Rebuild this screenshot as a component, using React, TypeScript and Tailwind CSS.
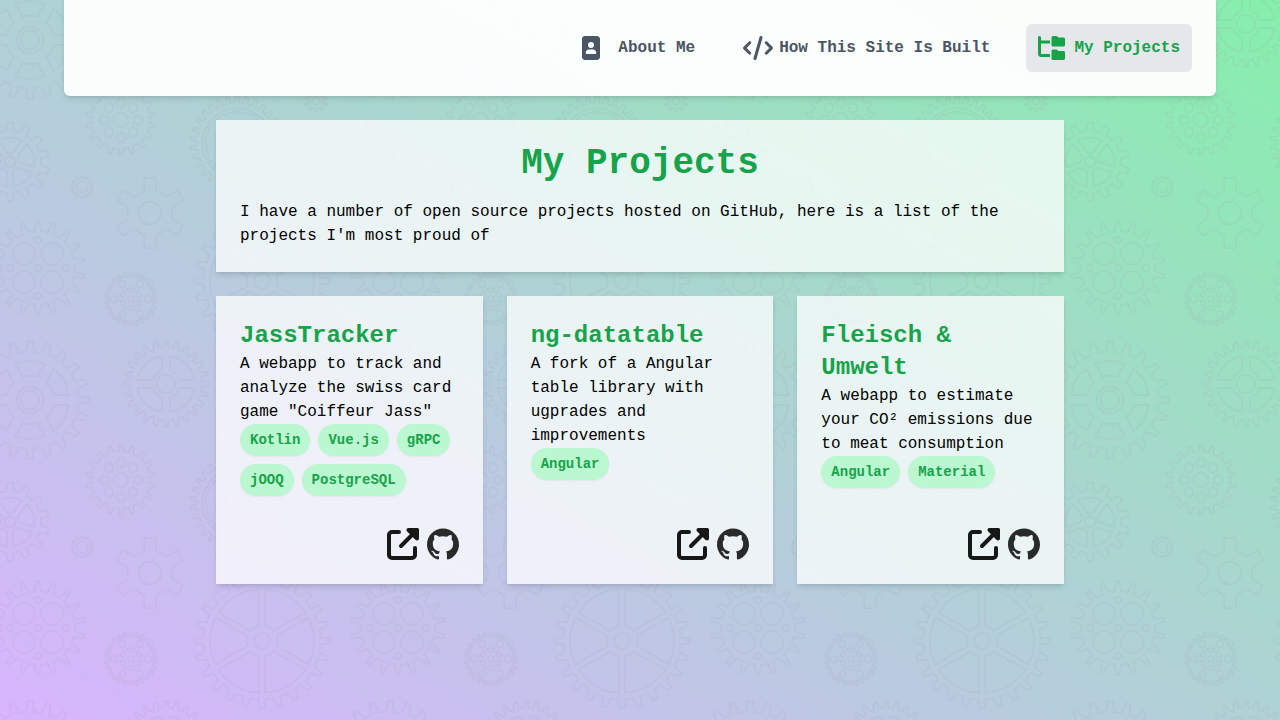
import type { ReactNode } from "react";
import { FaCode, FaFolderTree, FaImagePortrait } from "react-icons/fa6";
import { SiGithub } from "react-icons/si";

type Point = [number, number];

const polar = (r: number, deg: number): Point => {
  const a = (deg * Math.PI) / 180;
  return [r * Math.sin(a), -r * Math.cos(a)];
};

const fmt = ([x, y]: Point) => `${x.toFixed(2)} ${y.toFixed(2)}`;

/** Closed outline of a gear with evenly spaced, tapered teeth. */
function teeth(count: number, outer: number, root: number, tip = 0.13, base = 0.27) {
  const step = 360 / count;
  const points: string[] = [];
  for (let i = 0; i < count; i++) {
    const a = i * step;
    points.push(fmt(polar(root, a - base * step)));
    points.push(fmt(polar(outer, a - tip * step)));
    points.push(fmt(polar(outer, a + tip * step)));
    points.push(fmt(polar(root, a + base * step)));
  }
  return `M${points.join("L")}Z`;
}

/** Openings between the spokes of a wheel. */
function openings(count: number, inner: number, outer: number, halfSpoke: number, start: number) {
  const half = (r: number) => 180 / count - (Math.asin(halfSpoke / r) * 180) / Math.PI;
  let d = "";
  for (let i = 0; i < count; i++) {
    const a = start + (i * 360) / count;
    d += `M${fmt(polar(inner, a - half(inner)))}L${fmt(polar(outer, a - half(outer)))}`;
    d += `A${outer} ${outer} 0 0 1 ${fmt(polar(outer, a + half(outer)))}`;
    d += `L${fmt(polar(inner, a + half(inner)))}`;
    d += `A${inner} ${inner} 0 0 0 ${fmt(polar(inner, a - half(inner)))}Z`;
  }
  return d;
}

function holes(count: number, distance: number, r: number, start = 0) {
  return Array.from({ length: count }, (_, i) => {
    const [x, y] = polar(distance, start + (i * 360) / count);
    return <circle key={i} cx={x} cy={y} r={r} />;
  });
}

const gears: { x: number; y: number; r: number; shape: ReactNode }[] = [
  {
    x: 30, y: 40, r: 60,
    shape: (
      <>
        <path d={teeth(20, 59, 48.5)} />
        <path d={openings(6, 24, 39, 5, 0)} />
        <circle r="13.5" />
        <circle r="9.5" />
      </>
    ),
  },
  {
    x: 10, y: 162, r: 40,
    shape: (
      <>
        <path d={teeth(14, 39, 31, 0.17, 0.26)} />
        <path d={openings(5, 9, 24.5, 3, 0)} />
        <circle r="5.5" />
      </>
    ),
  },
  {
    x: 121, y: 120, r: 36,
    shape: (
      <>
        <path d={teeth(18, 35, 29, 0.14, 0.22)} />
        {holes(8, 17, 4.5)}
        <circle r="7.5" />
      </>
    ),
  },
  {
    x: 82, y: 187, r: 12,
    shape: (
      <>
        <path d={teeth(12, 11, 9, 0.1, 0.3)} />
        <circle r="5.5" />
      </>
    ),
  },
  {
    x: 150, y: 213, r: 36,
    shape: (
      <>
        <path d={teeth(6, 35.5, 23, 0.15, 0.26)} />
        <circle r="11.3" />
      </>
    ),
  },
  {
    x: 38, y: 268, r: 48,
    shape: (
      <>
        <path d={teeth(18, 47, 37, 0.1, 0.24)} />
        {holes(4, 20, 11, 45)}
        {holes(4, 28, 3.3)}
        <circle r="3.3" />
      </>
    ),
  },
  {
    x: 131, y: 299, r: 28,
    shape: (
      <>
        <path d={teeth(26, 27, 24, 0.06, 0.3)} />
        <circle r="22.5" />
        {holes(6, 17, 3.3, 30)}
        <path d={openings(6, 7, 11, 1.8, 0)} />
        <circle r="3.3" />
      </>
    ),
  },
  {
    x: 262, y: 281, r: 68,
    shape: (
      <>
        <path d={teeth(24, 67.5, 58.5, 0.13, 0.24)} />
        <path d={openings(6, 15.5, 52, 3, 30)} />
        <circle r="8" />
      </>
    ),
  },
  {
    x: 166, y: 24, r: 44,
    shape: (
      <>
        <path d={teeth(24, 43, 36)} />
        <path d={openings(4, 14, 28.5, 4, 45)} />
        <circle r="9.3" />
      </>
    ),
  },
  {
    x: 237, y: 143, r: 48,
    shape: (
      <>
        <path d={teeth(30, 47, 40)} />
        <path d={openings(12, 31, 35, 1.5, 15)} />
        <circle r="12.5" />
      </>
    ),
  },
  {
    x: 316, y: 101, r: 12,
    shape: (
      <>
        <path d={teeth(10, 11, 7.5, 0.15, 0.25)} />
        <circle r="4" />
      </>
    ),
  },
];

const TILE = 360;

function GearBackdrop() {
  return (
    <svg aria-hidden="true" className="pointer-events-none absolute inset-0 -z-10 h-full w-full">
      <defs>
        <pattern id="gears" width={TILE} height={TILE} patternUnits="userSpaceOnUse">
          <g fill="none" stroke="#9c92ac" opacity="0.12" strokeWidth="1.8" strokeLinejoin="round">
            {gears.flatMap((gear, i) =>
              [-TILE, 0, TILE].flatMap((dx) =>
                [-TILE, 0, TILE].map((dy) => {
                  const x = gear.x + dx;
                  const y = gear.y + dy;
                  const visible =
                    x + gear.r > 0 && x - gear.r < TILE && y + gear.r > 0 && y - gear.r < TILE;
                  return visible ? (
                    <g key={`${i}:${dx}:${dy}`} transform={`translate(${x} ${y})`}>
                      {gear.shape}
                    </g>
                  ) : null;
                }),
              ),
            )}
          </g>
        </pattern>
      </defs>
      <rect width="100%" height="100%" fill="url(#gears)" />
    </svg>
  );
}

function ExternalLinkIcon() {
  return (
    <svg viewBox="0 0 32 32" fill="none" aria-hidden="true" className="size-8">
      <path
        d="M12 4H5a3 3 0 0 0-3 3v20a3 3 0 0 0 3 3h20a3 3 0 0 0 3-3v-7M14 18 26 6"
        stroke="currentColor"
        strokeWidth="4"
        strokeLinecap="round"
      />
      <path
        d="M21.5 0H30.5a1.5 1.5 0 0 1 1.5 1.5V10.5c0 2-2.3 2.6-3.6 1.3L20.2 3.6C18.9 2.3 19.5 0 21.5 0Z"
        fill="currentColor"
      />
    </svg>
  );
}

function NavLink({ icon, active, children }: { icon: ReactNode; active?: boolean; children: ReactNode }) {
  return (
    <a
      href="#"
      aria-current={active ? "page" : undefined}
      className={
        active
          ? "flex items-center rounded-md bg-[#e5e7eb] p-3 font-bold text-[#16a34a]"
          : "flex items-center rounded-md p-3 font-bold text-[#4b5563]"
      }
    >
      <span className="w-9">{icon}</span>
      {children}
    </a>
  );
}

interface Project {
  name: string;
  description: string;
  tags: string[];
}

const projects: Project[] = [
  {
    name: "JassTracker",
    description: 'A webapp to track and analyze the swiss card game "Coiffeur Jass"',
    tags: ["Kotlin", "Vue.js", "gRPC", "jOOQ", "PostgreSQL"],
  },
  {
    name: "ng-datatable",
    description: "A fork of a Angular table library with ugprades and improvements",
    tags: ["Angular"],
  },
  {
    name: "Fleisch & Umwelt",
    description: "A webapp to estimate your CO² emissions due to meat consumption",
    tags: ["Angular", "Material"],
  },
];

function ProjectCard({ name, description, tags }: Project) {
  return (
    <article className="flex flex-col bg-white/75 p-6 shadow-md">
      <h2 className="text-2xl font-bold text-[#16a34a]">{name}</h2>
      <p>{description}</p>
      <ul className="flex flex-wrap gap-2">
        {tags.map((tag) => (
          <li
            key={tag}
            className="rounded-full bg-[#bbf7d0] px-[10px] py-1.5 text-sm font-bold text-[#16a34a] shadow-xs"
          >
            {tag}
          </li>
        ))}
      </ul>
      <div className="mt-auto flex justify-end gap-2 pt-8">
        <a href="#" aria-label={`Open ${name}`} className="text-[#171717]">
          <ExternalLinkIcon />
        </a>
        <a href="#" aria-label={`${name} on GitHub`} className="text-[#2a2a2a]">
          <SiGithub className="size-8" />
        </a>
      </div>
    </article>
  );
}

export default function App() {
  return (
    <div className="relative isolate min-h-screen bg-[linear-gradient(to_top_right,#d8b4fe,#86efac)] font-['Liberation_Mono',monospace] text-base text-black">
      <GearBackdrop />
      <header className="mx-auto w-[90%] rounded-b-md bg-white/95 p-6 shadow-md">
        <nav className="flex flex-wrap justify-end gap-6">
          <NavLink icon={<FaImagePortrait className="h-6 w-[18px]" />}>About Me</NavLink>
          <NavLink icon={<FaCode className="h-6 w-[30px]" />}>How This Site Is Built</NavLink>
          <NavLink active icon={<FaFolderTree className="h-6 w-[27px]" />}>
            My Projects
          </NavLink>
        </nav>
      </header>
      <main className="mx-auto flex max-w-4xl flex-col gap-6 p-6">
        <section className="bg-white/75 p-6 shadow-md">
          <h1 className="mb-4 text-center text-4xl font-bold text-[#16a34a]">My Projects</h1>
          <p>
            I have a number of open source projects hosted on GitHub, here is a list of the projects
            I'm most proud of
          </p>
        </section>
        <section className="grid gap-6 md:grid-cols-3">
          {projects.map((project) => (
            <ProjectCard key={project.name} {...project} />
          ))}
        </section>
      </main>
    </div>
  );
}
